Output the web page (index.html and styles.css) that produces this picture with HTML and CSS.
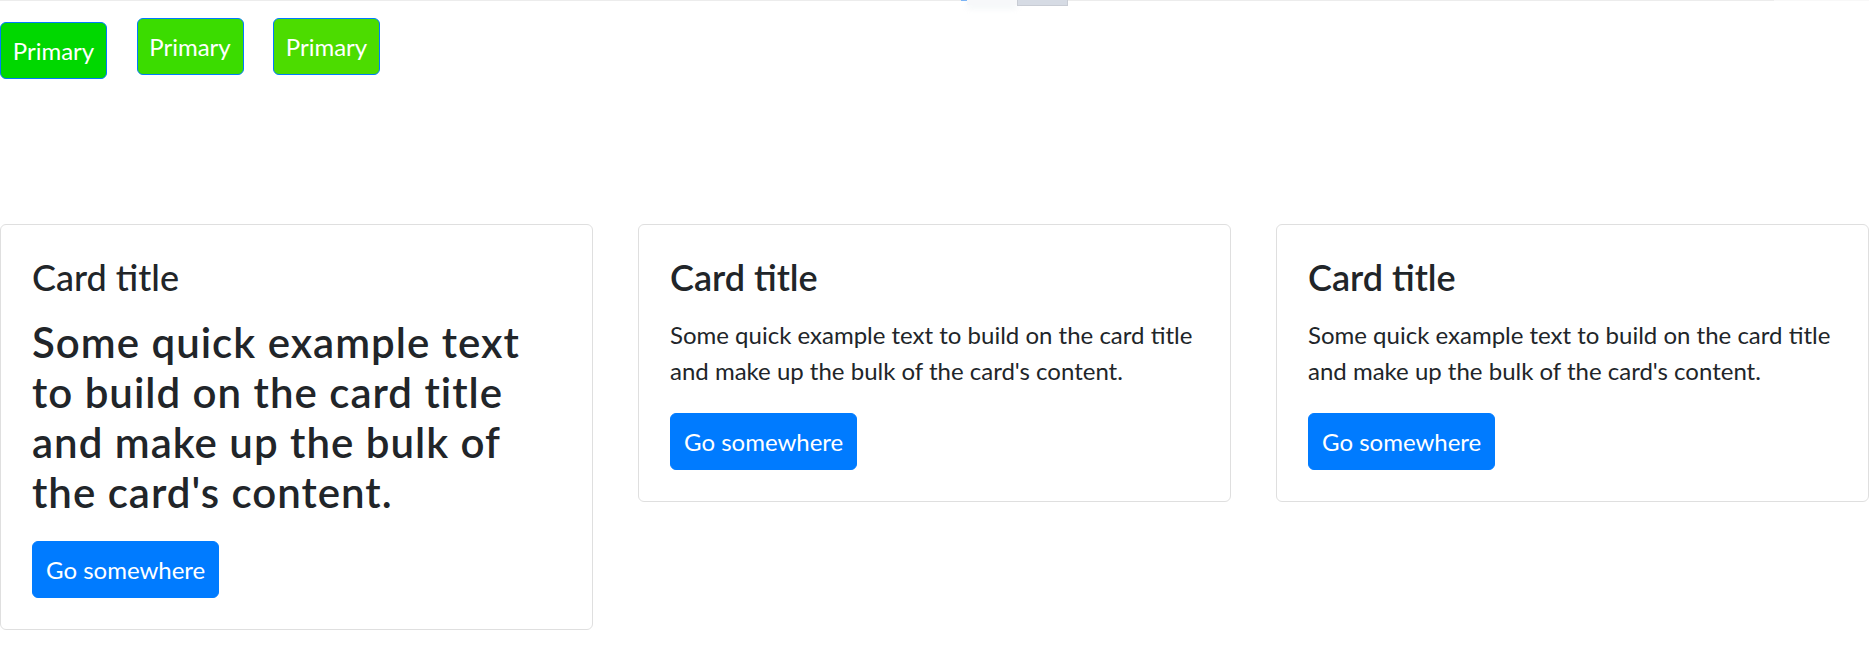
FILE: index.html
```html
<!DOCTYPE html>
<html lang="en">
<head>
<meta charset="utf-8">
<title>Cards</title>
<link rel="stylesheet" href="styles.css">
</head>
<body>
<div class="topline"></div>
<div class="tabstrip"><span class="tab-mark"></span><span class="tab-light"></span><span class="tab-dark"></span></div>
<div class="btn-row">
  <button class="btn-green g1">Primary</button>
  <button class="btn-green g2">Primary</button>
  <button class="btn-green g3">Primary</button>
</div>
<div class="cards">
  <div class="card">
    <h5 class="card-title regular">Card title</h5>
    <p class="card-text big">Some quick example text to build on the card title and make up the bulk of the card's content.</p>
    <a class="btn-blue" href="#">Go somewhere</a>
  </div>
  <div class="card">
    <h5 class="card-title">Card title</h5>
    <p class="card-text">Some quick example text to build on the card title and make up the bulk of the card's content.</p>
    <a class="btn-blue" href="#">Go somewhere</a>
  </div>
  <div class="card">
    <h5 class="card-title">Card title</h5>
    <p class="card-text">Some quick example text to build on the card title and make up the bulk of the card's content.</p>
    <a class="btn-blue" href="#">Go somewhere</a>
  </div>
</div>
</body>
</html>
```
FILE: styles.css
```css
html, body {
  margin: 0;
  padding: 0;
  background: #fff;
}
body {
  font-family: Lato, "Noto Sans", sans-serif;
  font-size: 24px;
  line-height: 36px;
  color: #212529;
  position: relative;
}
.topline {
  height: 1px;
  background: linear-gradient(to right, #ececec 0, #ececec 1774px, #f8f8f8 1774px);
}
.tabstrip {
  position: absolute;
  top: 0;
  left: 961px;
  display: flex;
  align-items: flex-start;
}
.tab-mark {
  width: 6px;
  height: 1px;
  background: #7ab3f5;
}
.tab-light {
  width: 50px;
  height: 5px;
  background: #f7f8fa;
  box-shadow: 0 3px 6px rgba(230, 236, 240, 0.6);
}
.tab-dark {
  width: 49px;
  height: 5px;
  background: #d6dbe4;
  border: 1px solid #c8ccd4;
  border-top: 0;
}
.btn-row {
  display: flex;
  align-items: flex-start;
  gap: 29.5px;
  padding-top: 17px;
}
.btn-green {
  box-sizing: border-box;
  width: 107px;
  height: 57px;
  padding: 0;
  font-family: inherit;
  font-size: 24px;
  line-height: 36px;
  color: #fff;
  border: 1.5px solid #007bff;
  border-radius: 6px;
  text-align: center;
}
.g1 { background: #00d800; margin-top: 4px; }
.g2 { background: #3bdc00; }
.g3 { background: #4cdc00; }
.cards {
  display: flex;
  align-items: flex-start;
  gap: 45px;
  margin-top: 145px;
}
.card {
  flex: 1 1 0;
  min-width: 0;
  border: 1px solid #dfdfdf;
  border-radius: 6px;
  padding: 31px;
  display: flex;
  flex-direction: column;
  align-items: flex-start;
}
.card-title {
  margin: 0 0 18px;
  font-size: 36px;
  line-height: 43px;
  font-weight: 600;
}
.card-title.regular {
  font-weight: 500;
}
.card-text {
  margin: 0 0 24px;
}
.card-text.big {
  font-size: 42px;
  line-height: 50px;
  font-weight: 600;
  letter-spacing: 1px;
}
.btn-blue {
  display: inline-block;
  padding: 9.5px 13px;
  background: #007bff;
  border: 1px solid #007bff;
  border-radius: 6px;
  color: #fff;
  text-decoration: none;
  font-size: 24px;
  line-height: 36px;
}
```
